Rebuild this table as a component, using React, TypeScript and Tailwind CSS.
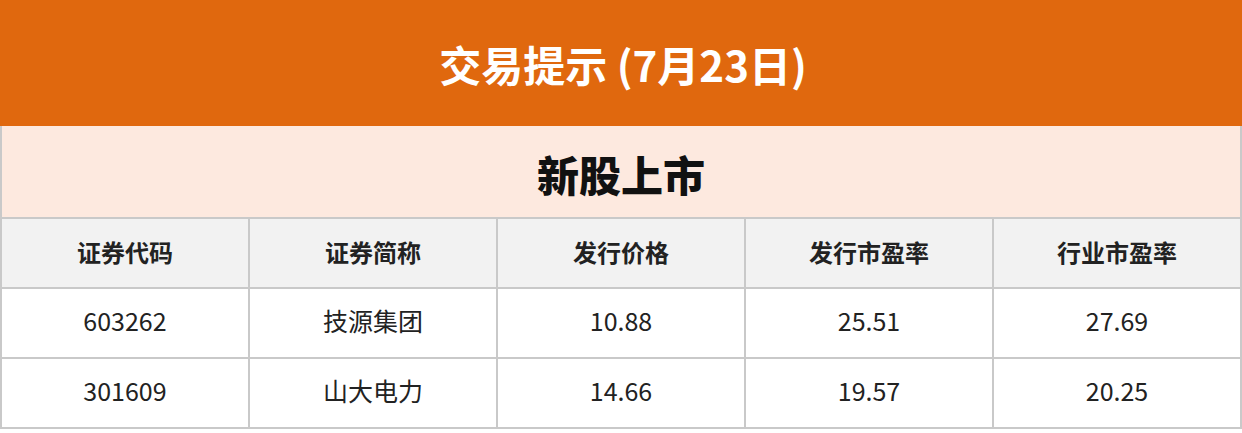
const FONT = { fontFamily: '"Noto Sans CJK SC", "Noto Sans", sans-serif' }

const headers = ['证券代码', '证券简称', '发行价格', '发行市盈率', '行业市盈率']
const rows = [
  ['603262', '技源集团', '10.88', '25.51', '27.69'],
  ['301609', '山大电力', '14.66', '19.57', '20.25'],
]

export default function App() {
  return (
    <div className="w-[1242px] h-[433px] bg-white overflow-hidden" style={FONT}>
      <div className="h-[126px] bg-[#e0680e] flex items-center justify-center">
        <h1 className="text-[42px] font-bold text-white leading-none pt-[2px] pl-[4px]">交易提示 (7月23日)</h1>
      </div>
      <div className="h-[91px] bg-[#fde9df] border-x-2 border-[#c9c9c9] flex items-center justify-center">
        <h2 className="text-[42px] font-black text-[#111] leading-none pt-[4px]">新股上市</h2>
      </div>
      <div className="grid grid-cols-5 border-l-2 border-t-2 border-[#c9c9c9]">
        {headers.map((h) => (
          <div
            key={h}
            className="h-[70px] bg-[#f2f2f2] border-r-2 border-b-2 border-[#c9c9c9] flex items-center justify-center pb-[3px] text-[24px] font-bold text-[#222]"
          >
            {h}
          </div>
        ))}
        {rows.map((r) =>
          r.map((c, i) => (
            <div
              key={r[0] + i}
              className="h-[70px] bg-white border-r-2 border-b-2 border-[#c9c9c9] flex items-center justify-center pb-[4px] text-[25px] text-[#222]"
            >
              {c}
            </div>
          ))
        )}
      </div>
    </div>
  )
}
